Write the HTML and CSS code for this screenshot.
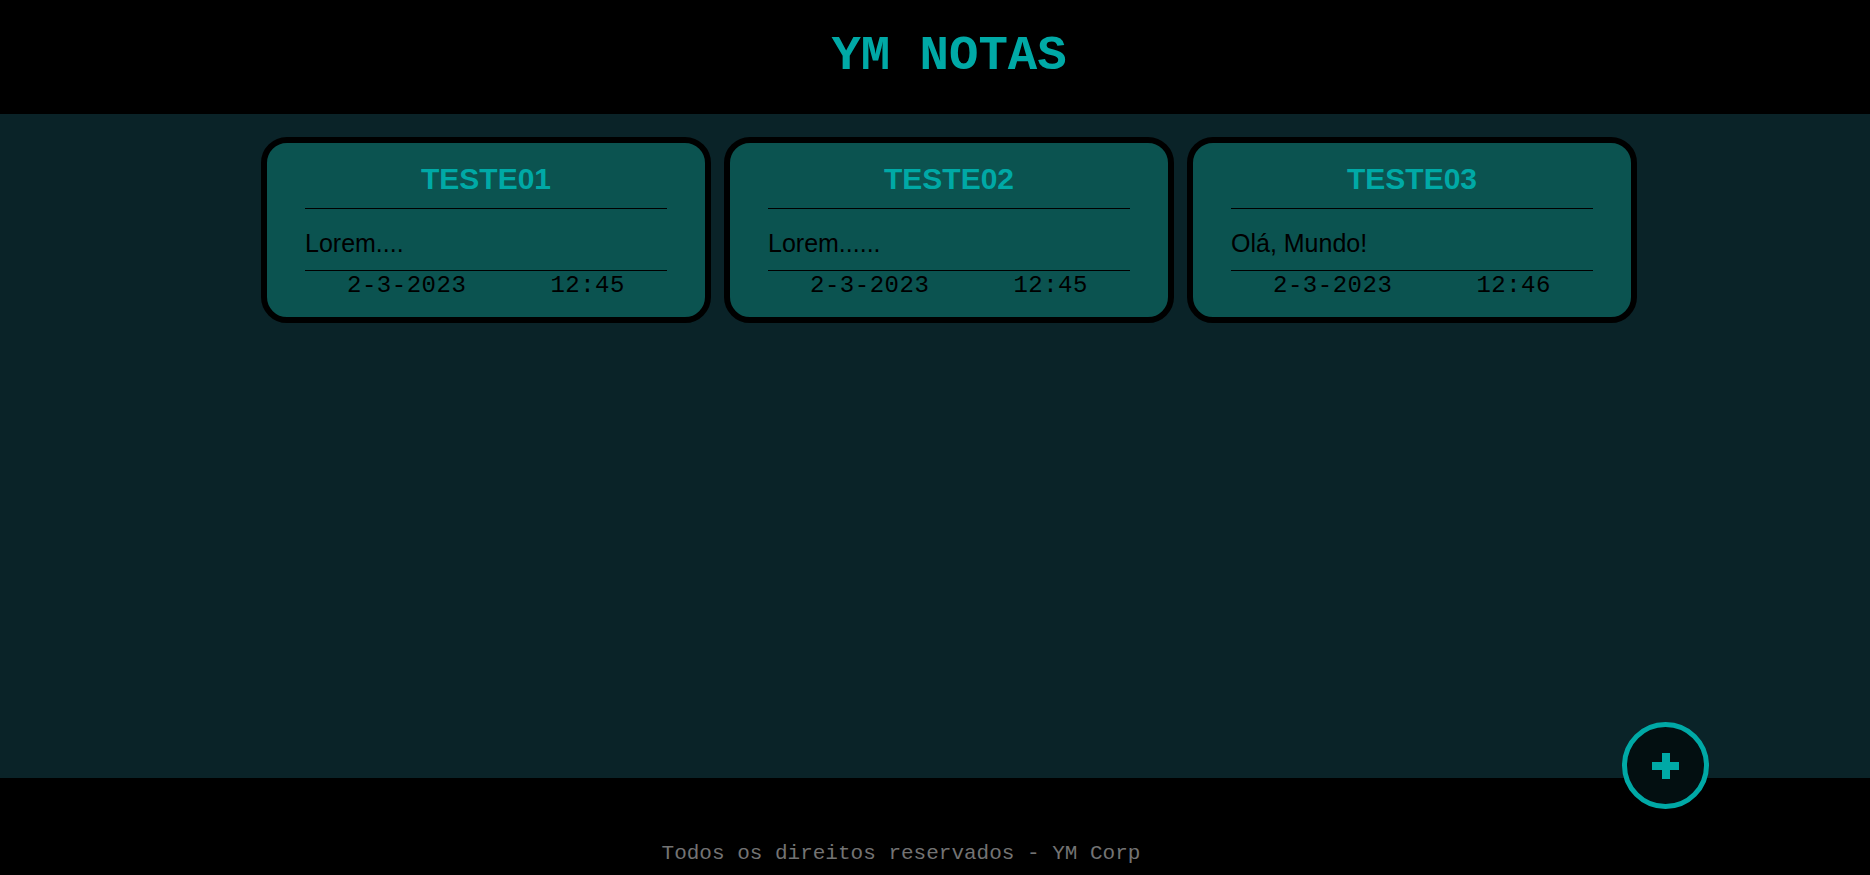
FILE: index.html
```html
<!DOCTYPE html>
<html lang="pt-BR">
<head>
<meta charset="utf-8">
<title>YM Notas</title>
<link rel="stylesheet" href="styles.css">
</head>
<body>
<header class="topbar">
  <h1 class="brand">YM NOTAS</h1>
</header>
<main class="board">
  <div class="notes">
    <article class="note">
      <h2 class="note-title">TESTE01</h2>
      <p class="note-body">Lorem....</p>
      <div class="note-meta"><span>2-3-2023</span><span>12:45</span></div>
    </article>
    <article class="note">
      <h2 class="note-title">TESTE02</h2>
      <p class="note-body">Lorem......</p>
      <div class="note-meta"><span>2-3-2023</span><span>12:45</span></div>
    </article>
    <article class="note">
      <h2 class="note-title">TESTE03</h2>
      <p class="note-body">Olá, Mundo!</p>
      <div class="note-meta"><span>2-3-2023</span><span>12:46</span></div>
    </article>
  </div>
</main>
<footer class="footer">
  <p class="copy">Todos os direitos reservados - YM Corp</p>
</footer>
<button class="add-btn" aria-label="Adicionar nota">
  <svg width="27" height="26" viewBox="0 0 27 26"><rect x="0" y="9" width="27" height="8" fill="#00a9a6"/><rect x="10" y="0" width="8" height="26" fill="#00a9a6"/></svg>
</button>
</body>
</html>
```

FILE: styles.css
```css
* { box-sizing: border-box; }
html, body { margin: 0; padding: 0; }
body { background: #000; position: relative; width: 1870px; height: 875px; overflow: hidden; }

.topbar {
  height: 114px;
  background: #000;
  display: flex;
  align-items: center;
  justify-content: center;
  padding-left: 28px;
  padding-bottom: 2px;
}
.brand {
  margin: 0;
  font-family: "Liberation Mono", "Courier New", monospace;
  font-weight: bold;
  font-size: 49px;
  line-height: 1;
  color: #00a9a6;
}

.board {
  height: 664px;
  background: #0a2328;
  padding-top: 23px;
  padding-left: 28px;
}
.notes {
  display: flex;
  justify-content: center;
  gap: 13px;
}
.note {
  width: 450px;
  height: 186px;
  border: 6px solid #000;
  border-radius: 26px;
  background: #0b5350;
  padding: 20px 38px 0;
}
.note-title {
  margin: 0;
  font-family: "Liberation Sans", Arial, sans-serif;
  font-weight: bold;
  font-size: 30px;
  line-height: 31px;
  text-align: center;
  color: #00a9a6;
  padding-bottom: 14px;
  border-bottom: 1px solid #000;
}
.note-body {
  margin: 22px 0 0;
  font-family: "Liberation Sans", Arial, sans-serif;
  font-size: 25px;
  line-height: 25px;
  color: #000;
  padding-bottom: 14px;
  border-bottom: 1px solid #000;
}
.note-meta {
  margin-top: 3px;
  display: flex;
  justify-content: space-around;
  font-family: "Liberation Mono", monospace;
  font-size: 24px;
  line-height: 24px;
  letter-spacing: 0.5px;
  color: #000;
}

.footer {
  height: 97px;
  background: #000;
  padding-top: 64px;
  padding-right: 68px;
  text-align: center;
}
.copy {
  margin: 0;
  font-family: "Liberation Mono", "Courier New", monospace;
  font-size: 21px;
  color: #737373;
}

.add-btn {
  position: absolute;
  left: 1622px;
  top: 722px;
  width: 87px;
  height: 87px;
  border-radius: 50%;
  border: 5px solid #00a9a6;
  background: #030f11;
  padding: 0;
  display: flex;
  align-items: center;
  justify-content: center;
  cursor: pointer;
}
.add-btn svg { display: block; }
```
